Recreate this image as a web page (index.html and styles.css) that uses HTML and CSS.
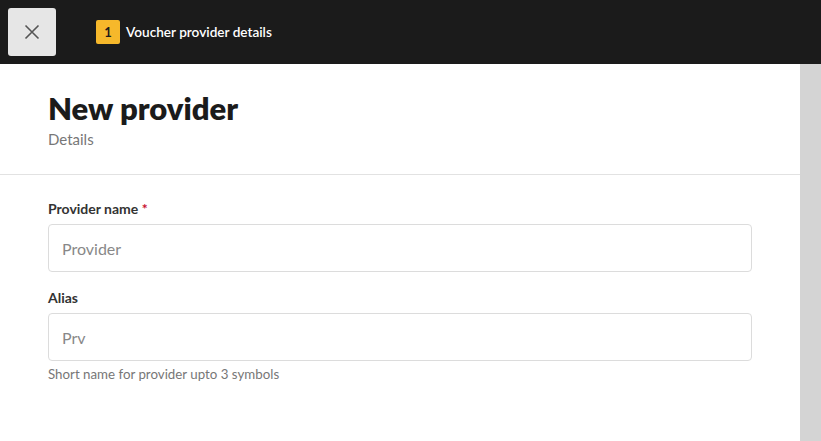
FILE: index.html
```html
<!DOCTYPE html>
<html>
<head>
<meta charset="utf-8">
<link rel="stylesheet" href="styles.css">
</head>
<body>
<header class="topbar">
  <button class="close-btn" aria-label="Close">
    <svg width="16" height="16" viewBox="0 0 16 16"><path d="M1.5 1.5 L14.5 14.5 M14.5 1.5 L1.5 14.5" stroke="#555" stroke-width="1.6" fill="none"/></svg>
  </button>
  <div class="step">
    <span class="step-num">1</span>
    <span class="step-label">Voucher provider details</span>
  </div>
</header>
<div class="layout">
  <main class="content">
    <section class="page-head">
      <h1 class="title">New provider</h1>
      <div class="subtitle">Details</div>
    </section>
    <form class="form">
      <div class="field">
        <label class="label">Provider name <span class="req">*</span></label>
        <input class="input" type="text" placeholder="Provider">
      </div>
      <div class="field">
        <label class="label">Alias</label>
        <input class="input" type="text" placeholder="Prv">
        <div class="hint">Short name for provider upto 3 symbols</div>
      </div>
    </form>
  </main>
  <aside class="side"></aside>
</div>
</body>
</html>
```

FILE: styles.css
```css
* { box-sizing: border-box; }
html, body { margin: 0; padding: 0; height: 100%; }
body {
  font-family: Lato, "Liberation Sans", sans-serif;
  background: #fff;
  color: #1b1b1b;
  overflow: hidden;
}
.topbar {
  height: 64px;
  background: #1b1b1b;
  display: flex;
  align-items: center;
  padding: 0 8px;
}
.close-btn {
  width: 48px;
  height: 48px;
  border: none;
  border-radius: 3px;
  background: #e6e6e6;
  display: flex;
  align-items: center;
  justify-content: center;
  padding: 0;
}
.step {
  display: flex;
  align-items: center;
  margin-left: 40px;
  gap: 6px;
}
.step-num {
  width: 24px;
  height: 24px;
  background: #f6b82b;
  border-radius: 2px;
  color: #1b1b1b;
  font-size: 13px;
  font-weight: 700;
  display: flex;
  align-items: center;
  justify-content: center;
}
.step-label {
  color: #fff;
  font-size: 13.6px;
  font-weight: 600;
}
.layout {
  display: flex;
  height: calc(100% - 64px);
}
.content { flex: 1; }
.side { width: 21px; background: #d4d4d4; }
.page-head {
  padding: 26px 48px 25px;
  border-bottom: 1px solid #e2e2e2;
}
.title {
  margin: 0;
  font-size: 31px;
  font-weight: 800;
  line-height: 36px;
  color: #1b1b1b;
}
.subtitle {
  margin-top: 3px;
  font-size: 15px;
  color: #777;
  line-height: 20px;
}
.form { padding: 25px 48px 0; }
.field { margin-bottom: 17px; width: 704px; }
.label {
  display: block;
  font-size: 14px;
  font-weight: 700;
  color: #333;
  line-height: 18px;
  margin-bottom: 6px;
}
.req { color: #c8102e; }
.input {
  display: block;
  width: 100%;
  height: 48px;
  border: 1px solid #dcdcdc;
  border-radius: 4px;
  padding: 0 13px;
  font-family: inherit;
  font-size: 16px;
  color: #333;
  outline: none;
}
.input::placeholder { color: #888; }
.hint {
  margin-top: 4px;
  font-size: 13.3px;
  color: #777;
  line-height: 18px;
}
```
